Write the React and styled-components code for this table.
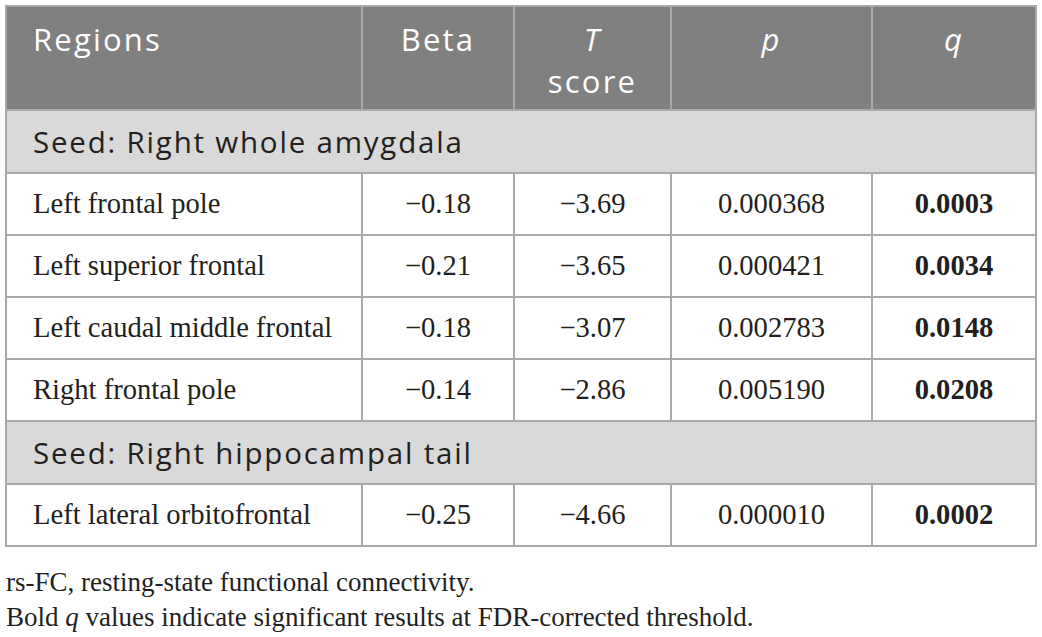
import React from "react";
import styled, { createGlobalStyle } from "styled-components";

const GlobalStyle = createGlobalStyle`
  html, body {
    margin: 0;
    padding: 0;
    background: #ffffff;
  }
  body {
    font-family: "Liberation Serif", "Times New Roman", serif;
    color: #231f20;
  }
`;

const Page = styled.div`
  padding: 5px 7px 0 5px;
  width: 1030px;
`;

const Table = styled.table`
  width: 1030px;
  border-collapse: collapse;
  border: 2px solid #a9a9a9;
  table-layout: fixed;
`;

const HeadCell = styled.th`
  background: #808080;
  color: #ffffff;
  font-family: "Open Sans", "Liberation Sans", sans-serif;
  font-weight: 400;
  font-size: 31px;
  letter-spacing: 2.2px;
  line-height: 42px;
  text-align: ${(p) => (p.$left ? "left" : "center")};
  vertical-align: top;
  padding: 11px 0 0 ${(p) => (p.$left ? "26px" : "0")};
  height: 104px;
  box-sizing: border-box;
  border: 2px solid #a9a9a9;
`;

const Italic = styled.span`
  font-style: italic;
`;

const SeedCell = styled.td`
  background: #d9d9d9;
  font-family: "Open Sans", "Liberation Sans", sans-serif;
  font-size: 29.5px;
  letter-spacing: 1.8px;
  color: #231f20;
  height: 61px;
  padding: 0 0 0 26px;
  border: 2px solid #a9a9a9;
  vertical-align: middle;
  white-space: nowrap;
`;

const Cell = styled.td`
  font-size: 28.6px;
  font-weight: ${(p) => (p.$bold ? 700 : 400)};
  text-align: ${(p) => (p.$left ? "left" : "center")};
  padding: 0 0 0 ${(p) => (p.$left ? "26px" : "0")};
  height: 60px;
  border: 2px solid #a9a9a9;
  vertical-align: middle;
  white-space: nowrap;
`;

const Notes = styled.div`
  margin-top: 18px;
  padding-left: 1px;
  font-size: 27px;
  line-height: 35px;
  color: #231f20;
`;

const NoteItalic = styled.span`
  font-style: italic;
`;

const groups = [
  {
    seed: "Seed: Right whole amygdala",
    rows: [
      ["Left frontal pole", "\u22120.18", "\u22123.69", "0.000368", "0.0003"],
      ["Left superior frontal", "\u22120.21", "\u22123.65", "0.000421", "0.0034"],
      ["Left caudal middle frontal", "\u22120.18", "\u22123.07", "0.002783", "0.0148"],
      ["Right frontal pole", "\u22120.14", "\u22122.86", "0.005190", "0.0208"],
    ],
  },
  {
    seed: "Seed: Right hippocampal tail",
    rows: [
      ["Left lateral orbitofrontal", "\u22120.25", "\u22124.66", "0.000010", "0.0002"],
    ],
  },
];

const App = () => {
  return (
    <Page>
      <GlobalStyle />
      <Table>
        <colgroup>
          <col style={{ width: "356px" }} />
          <col style={{ width: "152px" }} />
          <col style={{ width: "157px" }} />
          <col style={{ width: "201px" }} />
          <col style={{ width: "164px" }} />
        </colgroup>
        <thead>
          <tr>
            <HeadCell $left>Regions</HeadCell>
            <HeadCell>Beta</HeadCell>
            <HeadCell>
              <Italic>T</Italic>
              <br />
              score
            </HeadCell>
            <HeadCell>
              <Italic>p</Italic>
            </HeadCell>
            <HeadCell>
              <Italic>q</Italic>
            </HeadCell>
          </tr>
        </thead>
        <tbody>
          {groups.map((group) => (
            <React.Fragment key={group.seed}>
              <tr>
                <SeedCell colSpan={5}>{group.seed}</SeedCell>
              </tr>
              {group.rows.map((row) => (
                <tr key={row[0]}>
                  <Cell $left>{row[0]}</Cell>
                  <Cell>{row[1]}</Cell>
                  <Cell>{row[2]}</Cell>
                  <Cell>{row[3]}</Cell>
                  <Cell $bold>{row[4]}</Cell>
                </tr>
              ))}
            </React.Fragment>
          ))}
        </tbody>
      </Table>
      <Notes>
        <div>rs-FC, resting-state functional connectivity.</div>
        <div>
          Bold <NoteItalic>q</NoteItalic> values indicate significant results
          at FDR-corrected threshold.
        </div>
      </Notes>
    </Page>
  );
};

export default App;
